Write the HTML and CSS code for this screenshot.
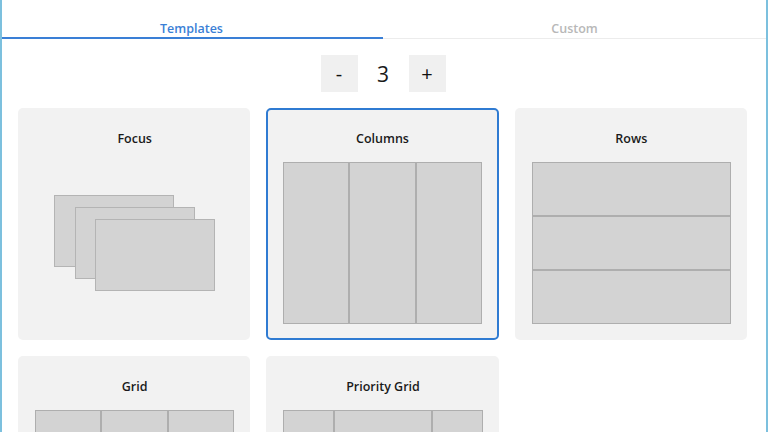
FILE: index.html
```html
<!DOCTYPE html>
<html>
<head>
    <meta name="viewport" content="width=device-width, initial-scale=1.0">
    <title>Layout Templates</title>
    <link rel="stylesheet" href="styles.css">
</head>
<body>
    <div class="frame">
        <div class="tabs">
            <div class="tab active">Templates</div>
            <div class="tab">Custom</div>
        </div>

        <div class="stepper">
            <button class="step">-</button>
            <span class="count">3</span>
            <button class="step">+</button>
        </div>

        <div class="templates">
            <div class="card">
                <div class="title">Focus</div>
                <div class="preview focus">
                    <div class="win one"></div>
                    <div class="win two"></div>
                    <div class="win three"></div>
                </div>
            </div>
            <div class="card selected">
                <div class="title">Columns</div>
                <div class="preview zones columns">
                    <div></div><div></div><div></div>
                </div>
            </div>
            <div class="card">
                <div class="title">Rows</div>
                <div class="preview zones rows">
                    <div></div><div></div><div></div>
                </div>
            </div>
            <div class="card">
                <div class="title">Grid</div>
                <div class="preview zones grid">
                    <div></div><div></div><div></div>
                </div>
            </div>
            <div class="card">
                <div class="title">Priority Grid</div>
                <div class="preview zones priority">
                    <div></div><div></div><div></div>
                </div>
            </div>
        </div>
    </div>
</body>
</html>
```

FILE: styles.css
```css
html,
body {
    margin: 0;
    background: white;
    font-family: "Open Sans", "Noto Sans", sans-serif;
    color: #1a1a1a;
    overflow: hidden;
}

.frame {
    height: 432px;
    overflow: hidden;
    border-left: 2px solid #7cc0de;
    border-right: 2px solid #7cc0de;
}

.tabs {
    display: flex;
    border-bottom: 1px solid #ececec;
}

.tab {
    flex: 1;
    text-align: center;
    font-size: 12.5px;
    font-weight: 600;
    color: #b8b8b8;
    padding: 20px 0 0;
    height: 17px;
    border-bottom: 2px solid transparent;
    margin-bottom: -1px;
}

.tab.active {
    color: #3a7fd6;
    border-bottom-color: #3a7fd6;
    margin-left: -2px;
}

.stepper {
    display: flex;
    justify-content: center;
    align-items: center;
    margin-top: 16px;
    margin-left: -2px;
}

.step {
    width: 37px;
    height: 37px;
    border: none;
    background: #f0f0f0;
    font-family: inherit;
    font-size: 20px;
    color: #111;
    padding: 0;
}

.count {
    width: 51px;
    text-align: center;
    font-size: 21px;
}

.templates {
    display: grid;
    grid-template-columns: repeat(3, 1fr);
    gap: 16px;
    padding: 16px 19px 0 16px;
}

.card {
    height: 232px;
    background: #f2f2f2;
    border-radius: 5px;
    box-sizing: border-box;
    padding: 22px 16px 16px 17px;
    display: flex;
    flex-direction: column;
}

.card.selected {
    border: 2px solid #2f7bd2;
    padding: 20px 15px 14px;
}

.title {
    text-align: center;
    font-size: 12.5px;
    font-weight: 600;
    height: 20px;
    margin-bottom: 12px;
}

.preview {
    flex: 1;
}

.zones {
    display: grid;
    border: 1px solid #aeaeae;
    background: #aeaeae;
    gap: 2px;
}

.zones div {
    background: #d3d3d3;
}

.columns,
.grid {
    grid-template-columns: repeat(3, 1fr);
}

.rows {
    grid-template-rows: repeat(3, 1fr);
}

.priority {
    grid-template-columns: 1fr 2fr 1fr;
}

.focus {
    position: relative;
}

.win {
    position: absolute;
    width: 118px;
    height: 70px;
    background: #d3d3d3;
    border: 1px solid #b4b4b4;
}

.win.one {
    left: 19px;
    top: 33px;
}

.win.two {
    left: 40px;
    top: 45px;
}

.win.three {
    left: 60px;
    top: 57px;
}
```
